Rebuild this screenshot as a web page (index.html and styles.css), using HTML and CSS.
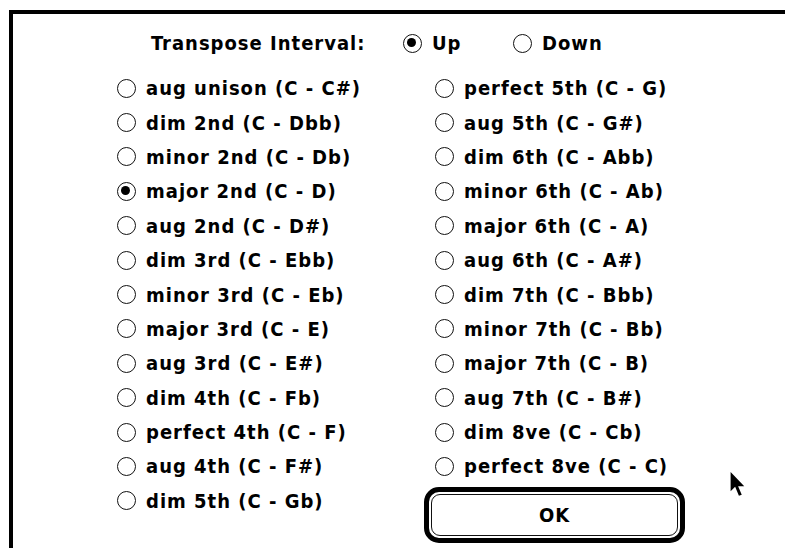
FILE: index.html
```html
<!DOCTYPE html>
<html>
<head>
<meta charset="utf-8">
<link rel="stylesheet" href="styles.css">
</head>
<body>
<div class="dialog">
  <div class="header">
    <span class="label">Transpose Interval:</span>
    <span class="opt opt-up"><span class="radio on"></span>Up</span>
    <span class="opt"><span class="radio"></span>Down</span>
  </div>
  <div class="cols">
    <div class="col left">
      <div class="row"><span class="radio"></span>aug unison (C - C#)</div>
      <div class="row"><span class="radio"></span>dim 2nd (C - Dbb)</div>
      <div class="row"><span class="radio"></span>minor 2nd (C - Db)</div>
      <div class="row"><span class="radio on"></span>major 2nd (C - D)</div>
      <div class="row"><span class="radio"></span>aug 2nd (C - D#)</div>
      <div class="row"><span class="radio"></span>dim 3rd (C - Ebb)</div>
      <div class="row"><span class="radio"></span>minor 3rd (C - Eb)</div>
      <div class="row"><span class="radio"></span>major 3rd (C - E)</div>
      <div class="row"><span class="radio"></span>aug 3rd (C - E#)</div>
      <div class="row"><span class="radio"></span>dim 4th (C - Fb)</div>
      <div class="row"><span class="radio"></span>perfect 4th (C - F)</div>
      <div class="row"><span class="radio"></span>aug 4th (C - F#)</div>
      <div class="row"><span class="radio"></span>dim 5th (C - Gb)</div>
    </div>
    <div class="col right">
      <div class="row"><span class="radio"></span>perfect 5th (C - G)</div>
      <div class="row"><span class="radio"></span>aug 5th (C - G#)</div>
      <div class="row"><span class="radio"></span>dim 6th (C - Abb)</div>
      <div class="row"><span class="radio"></span>minor 6th (C - Ab)</div>
      <div class="row"><span class="radio"></span>major 6th (C - A)</div>
      <div class="row"><span class="radio"></span>aug 6th (C - A#)</div>
      <div class="row"><span class="radio"></span>dim 7th (C - Bbb)</div>
      <div class="row"><span class="radio"></span>minor 7th (C - Bb)</div>
      <div class="row"><span class="radio"></span>major 7th (C - B)</div>
      <div class="row"><span class="radio"></span>aug 7th (C - B#)</div>
      <div class="row"><span class="radio"></span>dim 8ve (C - Cb)</div>
      <div class="row"><span class="radio"></span>perfect 8ve (C - C)</div>
      <div class="btn-ring"><div class="btn">OK</div></div>
    </div>
  </div>
  <svg class="cursor" width="16" height="25" viewBox="0 0 13 22">
    <path d="M0 0 V17 L4 13 L7.3 21 L9.8 20 L6.6 12.5 L12 12.5 Z" fill="#000"/>
  </svg>
</div>
</body>
</html>
```

FILE: styles.css
```css
html, body {
  margin: 0;
  padding: 0;
  background: #fff;
  overflow: hidden;
}
body {
  font-family: "DejaVu Sans Condensed", "DejaVu Sans", "Liberation Sans", sans-serif;
  font-weight: bold;
  font-size: 20px;
  color: #000;
}
.dialog {
  position: relative;
  margin: 10px 0 0 9px;
  border-top: 4px solid #000;
  border-left: 4px solid #000;
  height: 538px;
  box-sizing: border-box;
}
.header {
  display: flex;
  align-items: center;
  height: 24px;
  margin-top: 17px;
  padding-left: 138px;
}
.label {
  width: 252px;
  letter-spacing: 1px;
}
.opt {
  display: flex;
  align-items: center;
  letter-spacing: 1px;
}
.opt-up {
  width: 110px;
}
.radio {
  position: relative;
  flex: none;
  width: 19px;
  height: 19px;
  box-sizing: border-box;
  border: 1.6px solid #111;
  border-radius: 50%;
  margin-right: 10px;
}
.radio.on::after {
  content: "";
  position: absolute;
  left: 3.4px;
  top: 3.4px;
  width: 9px;
  height: 9px;
  border-radius: 50%;
  background: #000;
}
.cols {
  display: grid;
  grid-template-columns: 307px 1fr;
  margin-top: 16px;
  padding-left: 104px;
}
.col {
  display: flex;
  flex-direction: column;
}
.right {
  align-items: flex-start;
}
.right .row {
  padding-left: 11px;
}
.row {
  display: flex;
  align-items: center;
  height: 34.4px;
  letter-spacing: 1px;
  white-space: nowrap;
}
.btn-ring {
  margin-top: 3px;
  width: 261px;
  height: 56px;
  box-sizing: border-box;
  border: 5px solid #000;
  border-radius: 15px;
  padding: 2px;
}
.btn {
  height: 100%;
  box-sizing: border-box;
  border: 1.6px solid #111;
  border-radius: 9px;
  display: flex;
  align-items: center;
  justify-content: center;
  letter-spacing: 1px;
}
.cursor {
  position: absolute;
  left: 717px;
  top: 458px;
}
```
